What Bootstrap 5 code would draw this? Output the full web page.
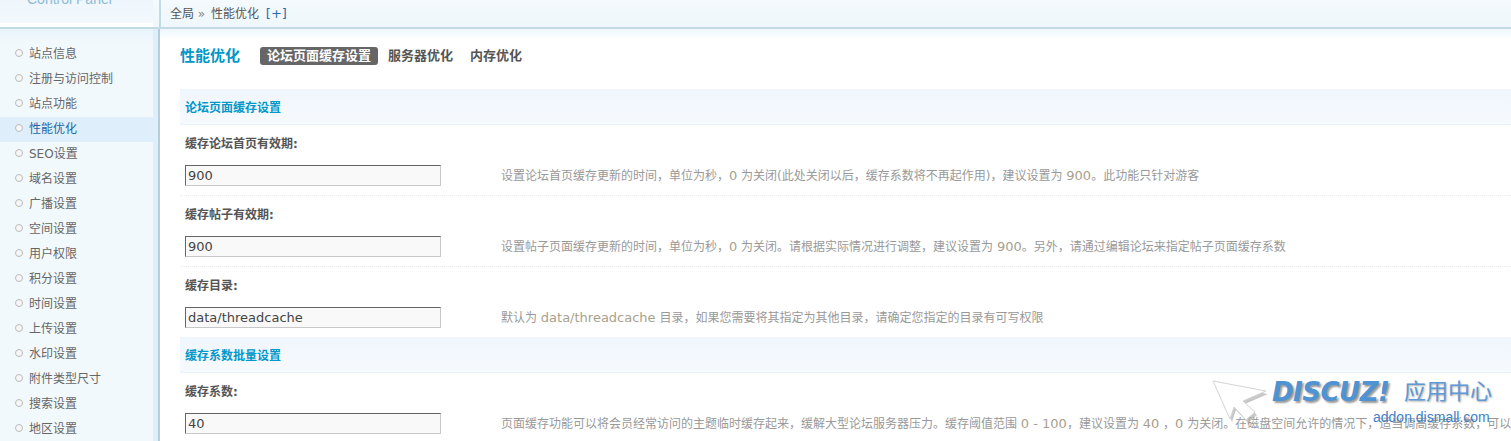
<!DOCTYPE html>
<html lang="zh-CN">
<head>
    <meta charset="UTF-8">
    <title>性能优化</title>
    <link href="https://cdn.jsdelivr.net/npm/bootstrap@5.3.0/dist/css/bootstrap.min.css" rel="stylesheet">
    <style>
        html, body { height: 100%; overflow: hidden; }
        body {
            font-family: "DejaVu Sans", "Noto Sans CJK SC", sans-serif;
            font-size: 12px;
            color: #666;
            background: #fff;
            position: relative;
        }
        .top-strip { height: 29px; background: linear-gradient(#f4fafd, #eff7fc); border-bottom: 2px solid #c3dbe6; }
        .logo-box { width: 153px; height: 27px; background: #fff; overflow: hidden; }
        .logo-inner { height: 23px; background: linear-gradient(#eef6fc, #f3f9fd); overflow: hidden; }
        .logo-text { font-size: 14px; line-height: 14px; color: #8dbcd4; margin-top: -8px; margin-left: 27px; font-family: "Liberation Sans", sans-serif; }
        .crumb-box { border-left: 2px solid #c3dbe6; height: 27px; margin-left: 6px; padding-left: 9px; line-height: 28px; font-size: 12px; color: #555; }
        .crumb-sep { color: #888; margin-right: 2px; }
        .crumb-add { color: #2b6cb0; margin-left: 3px; font-size: 13px; }
        .side-wrap { width: 160px; flex: none; background: #deeffb; border-right: 2px solid #b5cfd9; padding-right: 5px; height: 412px; }
        .side-menu { background: linear-gradient(#e8f4fb 0, #f2f9fd 14px); height: 100%; padding-top: 13px; }
        .side-item { height: 25px; line-height: 25px; padding-left: 29px; color: #666; position: relative; }
        .side-item::before {
            content: ""; position: absolute; left: 15px; top: 7px;
            width: 8px; height: 8px; border-radius: 50%;
            border: 1px solid #bbb; background: #f6f6f6;
        }
        .side-item.is-on { background: #deeffb; color: #2466a5; }
        .main-area { padding: 0 0 0 20px; min-width: 0; flex: 1; background: linear-gradient(#eef7fc 0, #fff 10px); }
        .tab-row { height: 60px; padding-top: 16px; }
        .page-title { font-size: 15px; line-height: 22px; font-weight: 700; color: #0097c9; margin: 0 20px 0 0; width: 60px; flex: none; }
        .tab-link { font-size: 13px; font-weight: 700; color: #555; margin-top: 2px; height: 18px; line-height: 18px; border-radius: 3px; white-space: nowrap; }
        .tab-link.is-on { background: #666; color: #fff; padding: 0 7px; margin-right: 10px; }
        .tab-plain { margin-right: 17px; }
        .sect-head { height: 36px; line-height: 38px; padding-left: 5px; font-weight: 700; color: #0097c9; background: linear-gradient(#f0f6fd, #f6fafe); border-bottom: 1px dotted #e6eef5; }
        .opt-label { height: 40px; padding: 9px 0 0 5px; line-height: 20px; font-weight: 700; color: #555; }
        .opt-row { height: 31px; border-bottom: 1px dotted #eaeaea; padding-left: 5px; }
        .opt-row.no-line { border-bottom: 0; height: 30px; }
        .opt-input {
            width: 256px; height: 21px; flex: none; padding: 0 2px; font-size: 13px; line-height: 19px; color: #444;
            font-family: "DejaVu Sans", sans-serif;
            background: #f9f9f9; border: 1px solid #c8c8c8; border-top-color: #666; border-left-color: #666; border-radius: 0; outline: 0;
        }
        .opt-note { margin-left: 60px; line-height: 22px; color: #999; white-space: nowrap; }
        .num-hint { color: #a89f8c; font-size: 13px; }
        .wm-box { position: absolute; left: 1212px; top: 376px; width: 290px; height: 65px; }
        .wm-brand { position: absolute; left: 60px; top: 1px; font-size: 26px; line-height: 30px; font-weight: 700; font-style: italic; letter-spacing: -.5px; color: #4f93d4; text-shadow: 2px 2px 2px #9a9a9a; white-space: nowrap; }
        .wm-cn { position: absolute; left: 192px; top: 1px; font-size: 22px; line-height: 30px; color: #5d9ad6; text-shadow: 1px 1px 2px #aaa; white-space: nowrap; }
        .wm-site { position: absolute; left: 161px; top: 32px; font-size: 14px; line-height: 18px; font-family: "Liberation Sans", sans-serif; color: #3f7fc4; white-space: nowrap; }
    </style>
</head>
<body>
    <div class="top-strip d-flex">
        <div class="logo-box flex-shrink-0"><div class="logo-inner"><div class="logo-text">Control Panel</div></div></div>
        <div class="crumb-box flex-grow-1">全局 <span class="crumb-sep">»</span> 性能优化 <span class="crumb-add">[+]</span></div>
    </div>
    <div class="d-flex">
        <div class="side-wrap">
            <div class="side-menu">
                <div class="side-item">站点信息</div>
                <div class="side-item">注册与访问控制</div>
                <div class="side-item">站点功能</div>
                <div class="side-item is-on">性能优化</div>
                <div class="side-item">SEO设置</div>
                <div class="side-item">域名设置</div>
                <div class="side-item">广播设置</div>
                <div class="side-item">空间设置</div>
                <div class="side-item">用户权限</div>
                <div class="side-item">积分设置</div>
                <div class="side-item">时间设置</div>
                <div class="side-item">上传设置</div>
                <div class="side-item">水印设置</div>
                <div class="side-item">附件类型尺寸</div>
                <div class="side-item">搜索设置</div>
                <div class="side-item">地区设置</div>
            </div>
        </div>
        <div class="main-area">
            <div class="tab-row d-flex align-items-start">
                <h1 class="page-title">性能优化</h1>
                <span class="tab-link is-on">论坛页面缓存设置</span>
                <span class="tab-link tab-plain">服务器优化</span>
                <span class="tab-link tab-plain">内存优化</span>
            </div>
            <div class="sect-head">论坛页面缓存设置</div>
            <div class="opt-label">缓存论坛首页有效期:</div>
            <div class="opt-row d-flex">
                <input class="opt-input" type="text" value="900">
                <div class="opt-note">设置论坛首页缓存更新的时间，单位为秒，<span class="num-hint">0</span> 为关闭(此处关闭以后，缓存系数将不再起作用)，建议设置为 <span class="num-hint">900</span>。此功能只针对游客</div>
            </div>
            <div class="opt-label">缓存帖子有效期:</div>
            <div class="opt-row d-flex">
                <input class="opt-input" type="text" value="900">
                <div class="opt-note">设置帖子页面缓存更新的时间，单位为秒，<span class="num-hint">0</span> 为关闭。请根据实际情况进行调整，建议设置为 <span class="num-hint">900</span>。另外，请通过编辑论坛来指定帖子页面缓存系数</div>
            </div>
            <div class="opt-label">缓存目录:</div>
            <div class="opt-row no-line d-flex">
                <input class="opt-input" type="text" value="data/threadcache">
                <div class="opt-note">默认为 <span class="num-hint">data/threadcache</span> 目录，如果您需要将其指定为其他目录，请确定您指定的目录有可写权限</div>
            </div>
            <div class="sect-head">缓存系数批量设置</div>
            <div class="opt-label">缓存系数:</div>
            <div class="opt-row no-line d-flex">
                <input class="opt-input" type="text" value="40">
                <div class="opt-note">页面缓存功能可以将会员经常访问的主题临时缓存起来，缓解大型论坛服务器压力。缓存阈值范围 <span class="num-hint">0 - 100</span>，建议设置为 <span class="num-hint">40</span> ，<span class="num-hint">0</span> 为关闭。在磁盘空间允许的情况下，适当调高缓存系数，可以提高论坛性能</div>
            </div>
        </div>
    </div>

    <!-- watermark sits on top of the last row -->
    <div class="wm-box">
        <svg width="60" height="50" viewBox="0 0 60 50" class="position-absolute top-0 start-0">
            <path d="M3 8 L56 18 L33 28 L45 39 L36 47 L24 34 L20 46 Z" fill="#9a9a9a" opacity=".55"/>
            <path d="M1 5 L54 15 L31 25 L43 36 L34 44 L22 31 L18 43 Z" fill="#fff" stroke="#d4d4d4" stroke-width="1"/>
        </svg>
        <div class="wm-brand">DISCUZ!</div>
        <div class="wm-cn">应用中心</div>
        <div class="wm-site">addon.dismall.com</div>
    </div>
</body>
</html>
